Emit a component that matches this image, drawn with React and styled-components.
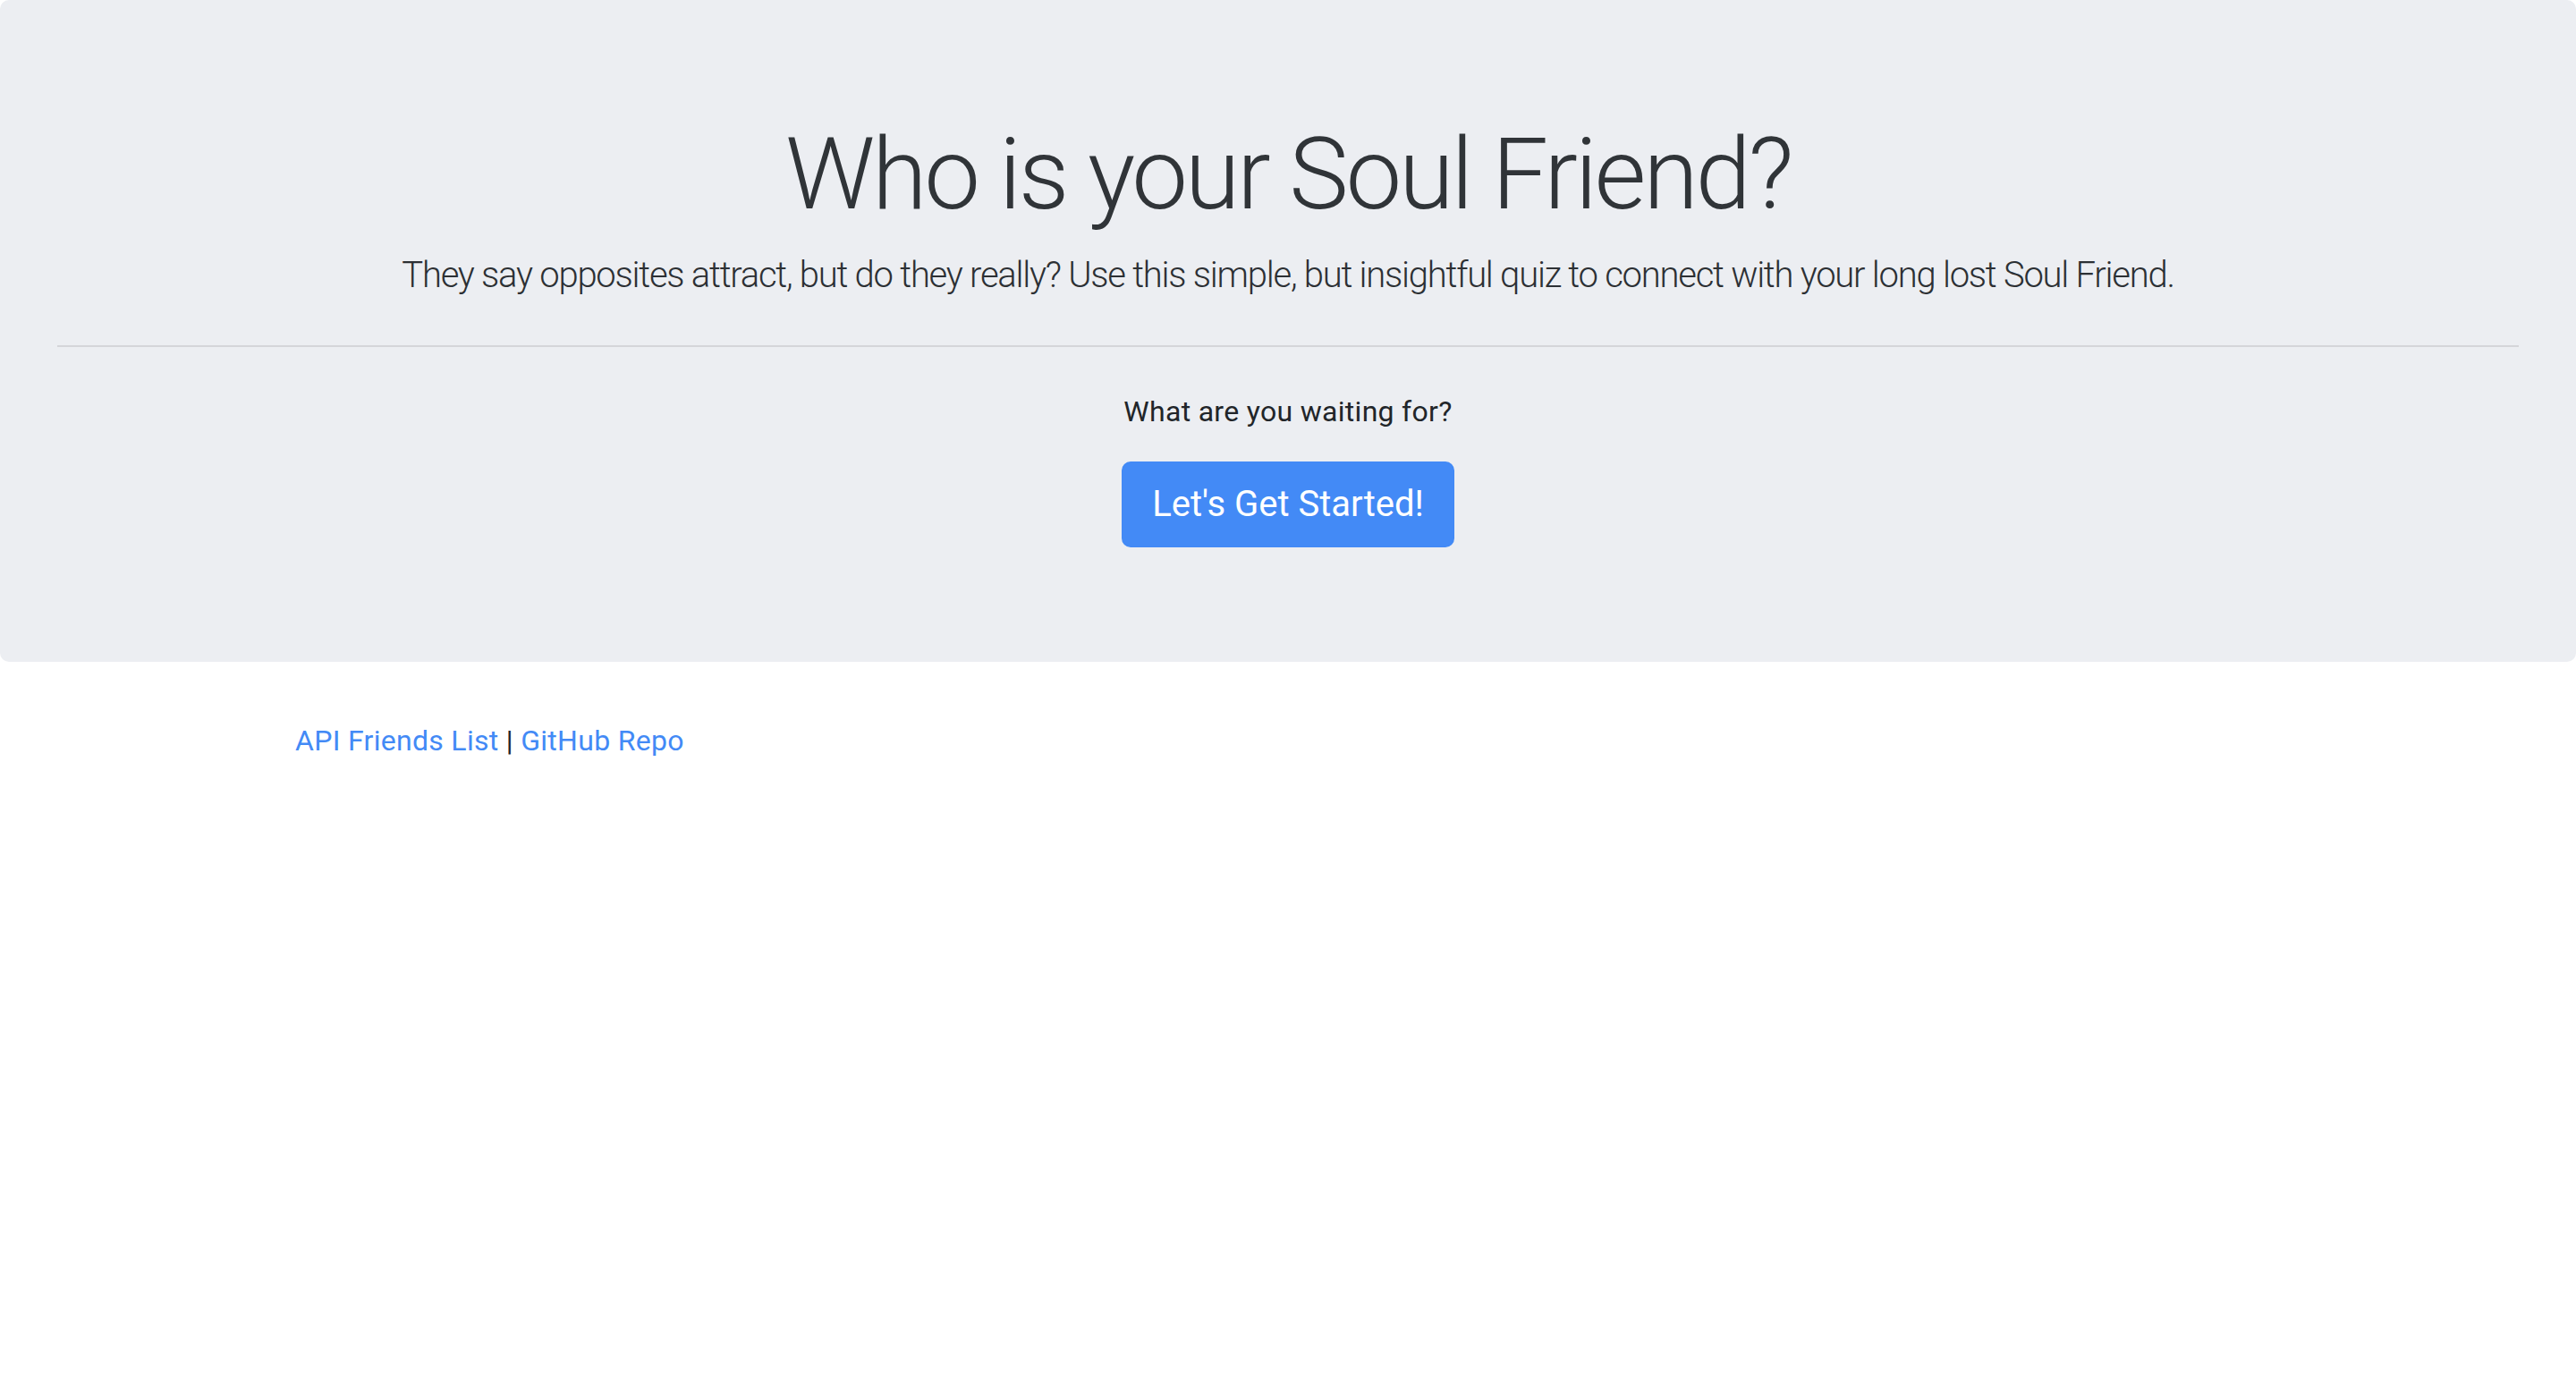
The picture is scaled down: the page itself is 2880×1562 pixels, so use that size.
import React from 'react'
import styled, { createGlobalStyle } from 'styled-components'

const GlobalStyle = createGlobalStyle`
  html, body {
    margin: 0;
    background: #fff;
    font-family: Roboto, "Liberation Sans", sans-serif;
    font-size: 32px;
    line-height: 1.5;
    color: #212529;
  }
  * { box-sizing: border-box; }
`

const Jumbotron = styled.header`
  background: #eceef2;
  padding: 128px 64px;
  border-radius: 10px;
  margin-bottom: 64px;
  display: flex;
  flex-direction: column;
  align-items: center;
  text-align: center;
`

const Title = styled.h1`
  margin: 0 0 16px;
  font-size: 112px;
  font-weight: 300;
  line-height: 1.2;
  letter-spacing: -3.3px;
  color: #303438;
`

const Lead = styled.p`
  margin: 0;
  font-size: 40px;
  font-weight: 300;
  line-height: 1.5;
  letter-spacing: -1.25px;
  color: #2c3034;
`

const Divider = styled.hr`
  align-self: stretch;
  margin: 48px 0;
  border: 0;
  border-top: 2px solid rgba(0, 0, 0, 0.1);
`

const Prompt = styled.p`
  margin: 0 0 32px;
  font-size: 32px;
  letter-spacing: 0.3px;
`

const StartButton = styled.a`
  display: inline-block;
  padding: 16px 32px;
  font-size: 40px;
  line-height: 1.5;
  color: #fff;
  background: #438af6;
  border: 2px solid #438af6;
  border-radius: 10px;
  text-decoration: none;
  cursor: pointer;
`

const Container = styled.footer`
  max-width: 2280px;
  margin: 0 auto;
  padding: 0 30px;
`

const Links = styled.p`
  margin: 0;
  font-size: 32px;
  letter-spacing: 0.3px;
`

const Link = styled.a`
  color: #438af6;
  text-decoration: none;
`

export default function App() {
  return (
    <>
      <GlobalStyle />
      <Jumbotron>
        <Title>Who is your Soul Friend?</Title>
        <Lead>
          They say opposites attract, but do they really? Use this simple, but insightful quiz to connect with your long lost Soul Friend.
        </Lead>
        <Divider />
        <Prompt>What are you waiting for?</Prompt>
        <StartButton href="#">Let's Get Started!</StartButton>
      </Jumbotron>
      <Container>
        <Links>
          <Link href="#">API Friends List</Link> | <Link href="#">GitHub Repo</Link>
        </Links>
      </Container>
    </>
  )
}
